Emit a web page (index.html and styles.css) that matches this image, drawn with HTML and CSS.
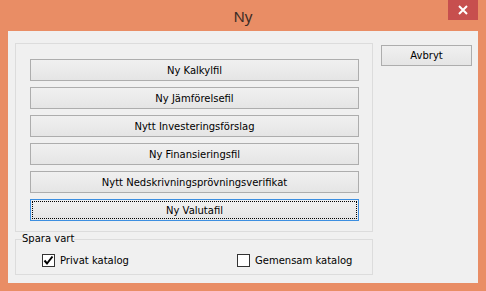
FILE: index.html
```html
<!DOCTYPE html>
<html lang="sv">
<head>
<meta charset="utf-8">
<title>Ny</title>
<link rel="stylesheet" href="styles.css">
</head>
<body>
<div class="window">
  <div class="titlebar">
    <span class="title">Ny</span>
    <div class="close" aria-label="Stäng">
      <svg width="10" height="10" viewBox="0 0 10 10"><path d="M1 1 L9 9 M9 1 L1 9" stroke="#fff" stroke-width="2" fill="none"/></svg>
    </div>
  </div>
  <div class="client">
    <div class="leftcol">
      <div class="group main-group">
        <button class="btn">Ny Kalkylfil</button>
        <button class="btn">Ny Jämförelsefil</button>
        <button class="btn">Nytt Investeringsförslag</button>
        <button class="btn">Ny Finansieringsfil</button>
        <button class="btn">Nytt Nedskrivningsprövningsverifikat</button>
        <button class="btn focused"><span class="focusrect">Ny Valutafil</span></button>
      </div>
      <fieldset class="group save-group">
        <legend class="legend">Spara vart</legend>
        <div class="checks">
          <label class="check first"><span class="box checked"><svg width="11" height="11" viewBox="0 0 11 11"><path d="M1.5 5.5 L4 8.5 L9.5 1.5" stroke="#000" stroke-width="2" fill="none"/></svg></span>Privat katalog</label>
          <label class="check"><span class="box"></span>Gemensam katalog</label>
        </div>
      </fieldset>
    </div>
    <div class="rightcol">
      <button class="btn cancel">Avbryt</button>
    </div>
  </div>
</div>
</body>
</html>
```

FILE: styles.css
```css
html, body {
  margin: 0;
  padding: 0;
  background: #e98d65;
}
.window {
  width: 486px;
  height: 291px;
  background: #e98d65;
  box-sizing: border-box;
  position: relative;
  font-family: "DejaVu Sans", sans-serif;
  font-size: 10px;
  color: #000;
}
.titlebar {
  height: 31px;
  position: relative;
  display: flex;
  justify-content: center;
}
.title {
  font-family: "Noto Sans", sans-serif;
  font-size: 15px;
  line-height: 15px;
  color: #3a2a24;
  padding-top: 9px;
}
.close {
  position: absolute;
  right: 8px;
  top: 0;
  width: 30px;
  height: 20px;
  background: #c74f4e;
  display: flex;
  align-items: center;
  justify-content: center;
}
.client {
  margin-left: 8px;
  width: 470px;
  height: 252px;
  background: #f0f0f0;
  box-sizing: border-box;
  padding: 12px 0 0 7px;
  display: flex;
  gap: 8px;
}
.leftcol {
  width: 358px;
  display: flex;
  flex-direction: column;
}
.group {
  border: 1px solid #dcdcdc;
  box-sizing: border-box;
}
.main-group {
  height: 189px;
  padding: 15px 0 0 14px;
  display: flex;
  flex-direction: column;
  gap: 6px;
}
.btn {
  font-family: "DejaVu Sans", sans-serif;
  font-size: 10px;
  color: #000;
  border: 1px solid #adadad;
  background: linear-gradient(#f0f0f0, #e5e5e5);
  border-radius: 0;
  padding: 0;
  margin: 0;
  height: 22px;
  width: 329px;
  box-sizing: border-box;
  display: flex;
  align-items: center;
  justify-content: center;
}
.btn.focused {
  border-color: #3c8ee0;
  padding: 1px;
}
.focusrect {
  flex: 1;
  align-self: stretch;
  border: 1px dotted #000;
  display: flex;
  align-items: center;
  justify-content: center;
}
.save-group {
  margin: 1px 0 0 0;
  padding: 0;
  height: 42px;
  min-width: 0;
}
.legend {
  padding: 0;
  margin-left: 6px;
  line-height: 12px;
  color: #000;
}
.checks {
  display: flex;
  padding: 9px 0 0 26px;
}
.check {
  display: flex;
  align-items: center;
  gap: 5px;
  line-height: 13px;
}
.check.first {
  width: 195px;
}
.box {
  width: 13px;
  height: 13px;
  box-sizing: border-box;
  border: 1px solid #333;
  background: #fff;
  display: flex;
  align-items: center;
  justify-content: center;
}
.rightcol {
  padding-top: 2px;
}
.cancel {
  width: 91px;
  height: 21px;
}
```
